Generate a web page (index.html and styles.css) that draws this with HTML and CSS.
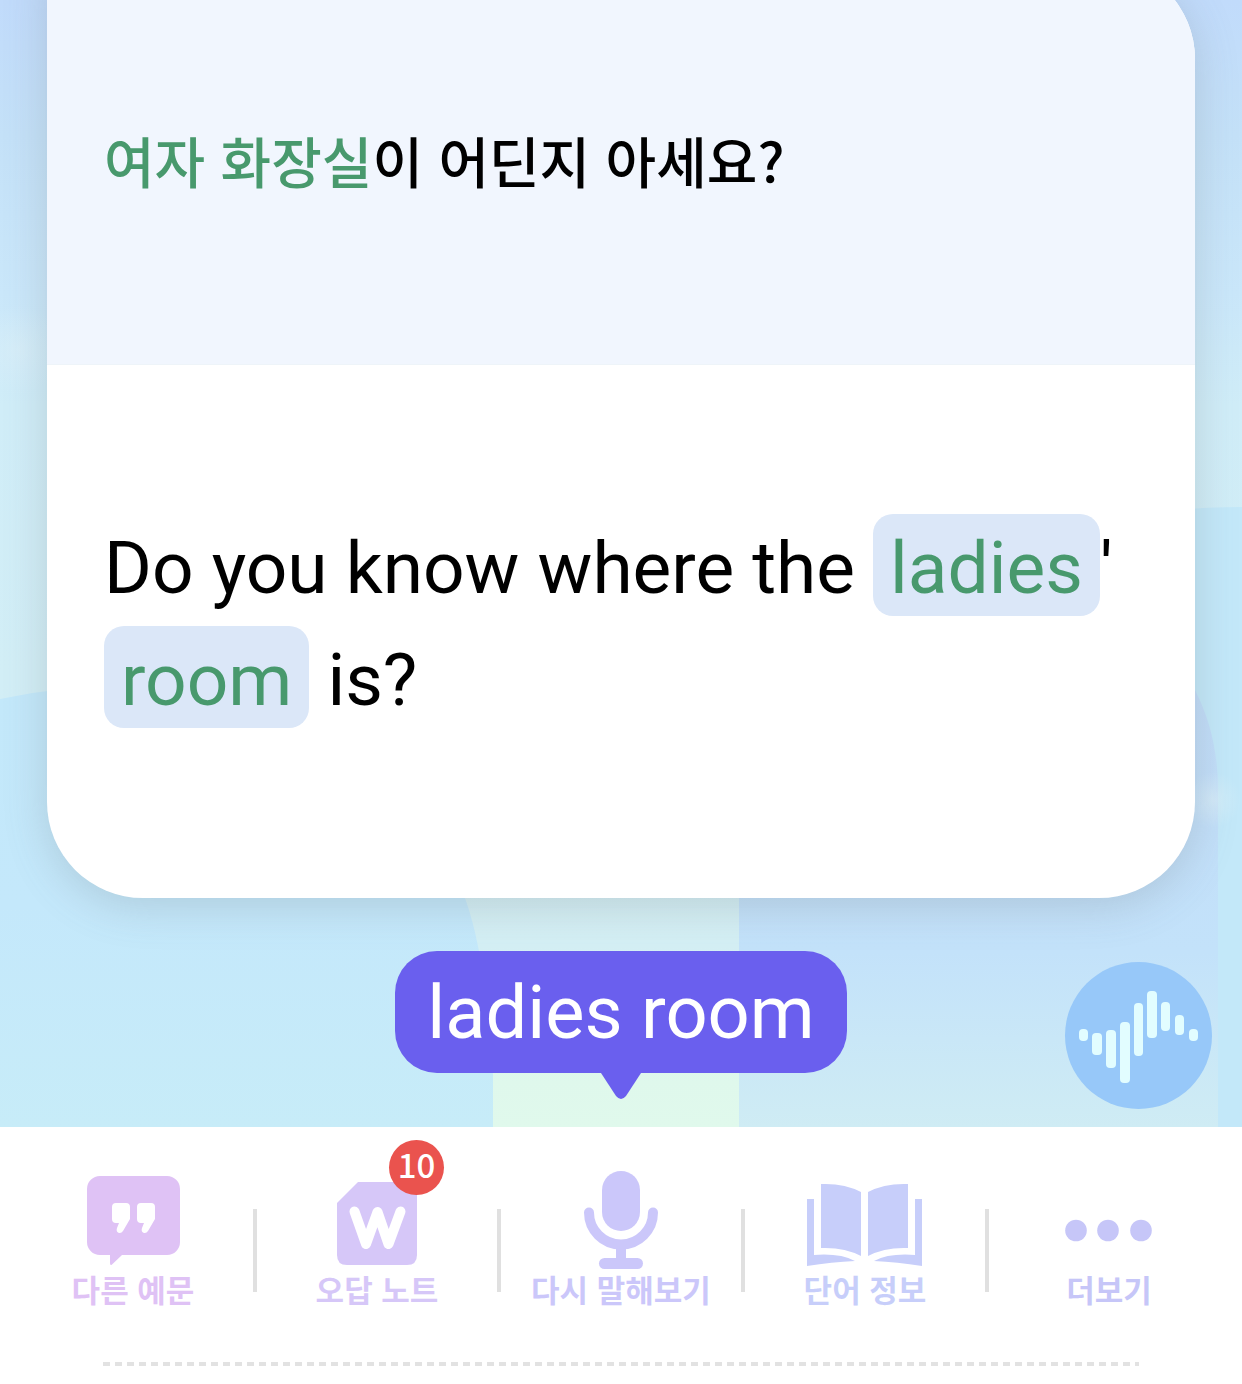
FILE: index.html
```html
<!DOCTYPE html>
<html lang="ko">
<head>
<meta charset="utf-8">
<meta name="viewport" content="width=device-width, initial-scale=1">
<title>ladies room</title>
<link rel="stylesheet" href="styles.css">
</head>
<body>
<main class="scene">
  <svg class="backdrop" viewBox="0 0 1242 1127" preserveAspectRatio="none" aria-hidden="true">
    <defs>
      <linearGradient id="sky" x1="0" y1="0" x2="0" y2="1">
        <stop offset="0" stop-color="#c1dbfb"/>
        <stop offset=".12" stop-color="#c4e1f8"/>
        <stop offset=".26" stop-color="#cae7fa"/>
        <stop offset=".36" stop-color="#d0edf8"/>
        <stop offset=".84" stop-color="#d4eff4"/>
        <stop offset=".96" stop-color="#dff8ec"/>
        <stop offset="1" stop-color="#e0f9ec"/>
      </linearGradient>
      <linearGradient id="hill" x1="0" y1="0" x2="0" y2="1">
        <stop offset="0" stop-color="#c3e8fa"/>
        <stop offset=".5" stop-color="#c4e8fb"/>
        <stop offset="1" stop-color="#c7ecf8"/>
      </linearGradient>
      <linearGradient id="tower" x1="0" y1="0" x2="0" y2="1">
        <stop offset="0" stop-color="#c1dcf8"/>
        <stop offset=".6" stop-color="#c3e2fa"/>
        <stop offset="1" stop-color="#cfecf4"/>
      </linearGradient>
      <radialGradient id="glow">
        <stop offset="0" stop-color="#dcf0f8" stop-opacity=".6"/>
        <stop offset="1" stop-color="#dcf0f8" stop-opacity="0"/>
      </radialGradient>
    </defs>
    <rect width="1242" height="1127" fill="url(#sky)"/>
    <circle cx="18" cy="350" r="45" fill="url(#glow)"/>
    <path d="M1150 512Q1200 507 1242 507V1127H1150z" fill="#c3e8f9"/>
    <path d="M0 699Q60 686 120 686C300 686 418 770 465 898Q486 956 493 1075V1127H0z" fill="url(#hill)"/>
    <path d="M739 690H1195Q1218 735 1218 790V1127H739z" fill="url(#tower)"/>
    <circle cx="1213" cy="800" r="28" fill="url(#glow)"/>
  </svg>

  <article class="card">
    <section class="prompt">
      <p class="prompt-text"><span class="mark">여자 화장실</span>이 어딘지 아세요?</p>
    </section>
    <section class="answer">
      <p class="answer-text" lang="en">Do you know where the <span class="chip">ladies</span>' <span class="chip">room</span> is?</p>
    </section>
  </article>

  <div class="bubble" lang="en">
    <span class="bubble-text">ladies room</span>
    <svg class="bubble-tail" width="42" height="26" viewBox="0 0 42 26" aria-hidden="true"><path d="M1 0H41L26 23Q21 29 16 23z"/></svg>
  </div>

  <button class="voice" type="button" aria-label="음성">
    <svg width="147" height="147" viewBox="0 0 147 147" aria-hidden="true">
      <g fill="#e2fdff">
        <rect x="14" y="67" width="9" height="12" rx="4"/>
        <rect x="27" y="71" width="10" height="22" rx="4"/>
        <rect x="41" y="68" width="10" height="38" rx="4"/>
        <rect x="55" y="60" width="10" height="61" rx="4"/>
        <rect x="69" y="41" width="9" height="53" rx="4"/>
        <rect x="82" y="29" width="10" height="47" rx="4"/>
        <rect x="96" y="40" width="9" height="29" rx="4"/>
        <rect x="110" y="53" width="9" height="20" rx="4"/>
        <rect x="124" y="67" width="9" height="12" rx="4"/>
      </g>
    </svg>
  </button>
</main>

<footer class="dock">
  <nav class="tools">
    <button class="tool tool-quote" type="button">
      <svg class="icon" viewBox="0 0 120 104" aria-hidden="true">
        <path fill="currentColor" d="M27 9H94A13 13 0 0 1 107 22V75A13 13 0 0 1 94 88H49L39 97.500Q37 99 37 96V88H27A13 13 0 0 1 14 75V22A13 13 0 0 1 27 9z"/>
        <path id="quote" fill="#fff" d="M43 36H53Q57 36 57 40V52L50 64Q48 67 45 65.500Q43 64 44 61L46 56H43Q39 56 39 52V40Q39 36 43 36z"/>
        <use href="#quote" x="25"/>
      </svg>
      <span class="label">다른 예문</span>
    </button>
    <button class="tool tool-note" type="button">
      <svg class="icon" viewBox="0 0 120 104" aria-hidden="true">
        <path fill="currentColor" d="M41 15H100V88Q100 98 90 98H30Q20 98 20 88V36z"/>
        <polyline points="37.500,44.500 49,77 60.500,45 71.500,77 83.500,44.500" fill="none" stroke="#fff" stroke-width="10" stroke-linecap="round" stroke-linejoin="round"/>
      </svg>
      <span class="label">오답 노트</span>
      <span class="badge">10</span>
    </button>
    <button class="tool tool-mic" type="button">
      <svg class="icon" viewBox="0 0 120 104" aria-hidden="true">
        <rect x="41" y="4" width="38" height="60" rx="19" fill="currentColor"/>
        <path d="M28 45.500A32 32 0 0 0 92 45.500" fill="none" stroke="currentColor" stroke-width="10" stroke-linecap="round"/>
        <rect x="55" y="76" width="10" height="18" fill="currentColor"/>
        <rect x="38" y="91" width="44" height="11" rx="5.500" fill="currentColor"/>
      </svg>
      <span class="label">다시 말해보기</span>
    </button>
    <button class="tool tool-book" type="button">
      <svg class="icon" viewBox="0 0 120 104" aria-hidden="true">
        <g id="half" fill="currentColor">
          <path d="M16 17Q39 16 56 25V89Q39 80 16 81z"/>
          <path d="M2 32H9V88Q35 86 50 94Q27 95 2 99z"/>
        </g>
        <use href="#half" transform="matrix(-1 0 0 1 119 0)"/>
      </svg>
      <span class="label">단어 정보</span>
    </button>
    <button class="tool tool-more" type="button">
      <svg class="icon" viewBox="0 0 120 104" aria-hidden="true">
        <g fill="currentColor"><circle cx="27" cy="63.500" r="10.800"/><circle cx="59" cy="63.500" r="10.800"/><circle cx="92" cy="63.500" r="10.800"/></g>
      </svg>
      <span class="label">더보기</span>
    </button>
  </nav>
  <hr class="rule">
</footer>
</body>
</html>
```
FILE: styles.css
```css
* {
  box-sizing: border-box;
}

body {
  margin: 0;
  background: #fff;
  color: #000;
  font-family: Roboto, "Noto Sans CJK KR", sans-serif;
  overflow-x: hidden;
}

p {
  margin: 0;
}

button {
  margin: 0;
  padding: 0;
  border: 0;
  background: none;
  font: inherit;
  cursor: pointer;
}

/* Scene behind the sentence card */
.scene {
  position: relative;
  display: flex;
  flex-direction: column;
  align-items: center;
  padding: 0 47px 28px;
  overflow: hidden;
}

.backdrop {
  position: absolute;
  inset: 0;
  width: 100%;
  height: 100%;
}

.card {
  position: relative;
  align-self: stretch;
  margin-top: -37px;
  margin-bottom: 53px;
  border-radius: 0 96px 96px 96px;
  background: #fff;
  box-shadow: 0 8px 44px rgba(100, 110, 115, 0.23);
}

.prompt,
.answer {
  display: flex;
  align-items: center;
  padding: 0 57px;
}

.prompt {
  min-height: 402px;
  padding-bottom: 10px;
  border-bottom: 1px solid #eef4f9;
  border-radius: 0 96px 0 0;
  background: #f1f6fe;
}

.prompt-text {
  font-family: "Noto Sans CJK KR", sans-serif;
  font-size: 55px;
  font-weight: 500;
  line-height: 80px;
}

.mark,
.chip {
  color: #48996d;
}

.answer {
  min-height: 533px;
  padding-bottom: 16px;
}

.answer-text {
  font-size: 73px;
  line-height: 112px;
}

.chip {
  display: inline-block;
  padding: 6px 17px 0;
  border-radius: 20px;
  background: #dbe7f8;
  line-height: 96px;
}

/* Recognised phrase */
.bubble {
  position: relative;
  display: flex;
  flex-direction: column;
  align-items: center;
}

.bubble-text {
  padding: 2px 32px 0;
  border-radius: 42px;
  background: #6a5fee;
  color: #fff;
  font-size: 74px;
  line-height: 120px;
}

.bubble-tail {
  display: block;
  fill: #6a5fee;
}

.voice {
  position: absolute;
  right: 30px;
  bottom: 18px;
  border-radius: 50%;
  background: #97c8f9;
}

.voice svg {
  display: block;
}

/* Bottom tools */
.dock {
  padding: 40px 11px 19px;
  background: #fff;
}

.tools {
  display: grid;
  grid-template-columns: repeat(5, 1fr);
}

.tool {
  position: relative;
  display: flex;
  flex-direction: column;
  align-items: center;
}

.tool + .tool::before {
  content: "";
  position: absolute;
  top: 42px;
  left: -2px;
  width: 4px;
  height: 83px;
  background: #e0e0e0;
}

.icon {
  display: block;
  width: 120px;
  height: 104px;
}

.label {
  font-family: "Noto Sans CJK KR", sans-serif;
  font-size: 31px;
  font-weight: 700;
  line-height: 36px;
  white-space: nowrap;
}

.tool-quote { color: #dfc2f5; }
.tool-note { color: #d6c7f8; }
.tool-mic { color: #cbc7fa; }
.tool-book { color: #c7cefa; }
.tool-more { color: #c6c6f8; }

.badge {
  position: absolute;
  top: -27px;
  left: calc(50% + 12px);
  width: 55px;
  height: 55px;
  border-radius: 50%;
  background: #ea534e;
  color: #fff;
  font-family: "Noto Sans CJK KR", sans-serif;
  font-size: 33px;
  font-weight: 500;
  line-height: 48px;
  text-align: center;
}

.rule {
  height: 4px;
  margin: 55px 92px 0;
  border: 0;
  background: repeating-linear-gradient(90deg, #e2e2e2 0 7px, transparent 7px 12px);
}
```
